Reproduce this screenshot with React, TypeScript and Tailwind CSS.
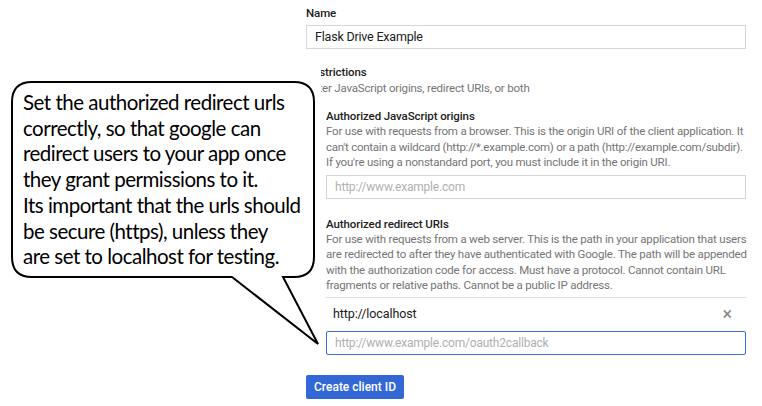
import React from "react";

export default function App() {
  const desc = "text-[11.5px] leading-[15.5px] tracking-[-0.2px] text-[#757575] whitespace-nowrap";
  const label = "text-[11.5px] leading-[16px] font-medium tracking-[-0.1px] text-[#212121]";
  return (
    <div className="relative w-[762px] h-[406px] bg-white overflow-hidden" style={{ fontFamily: "Roboto, 'Liberation Sans', sans-serif" }}>
      <div className="pl-[306px] pr-[16px] pt-[5px]">
        <div className={label}>Name</div>
        <div className="mt-[4px] h-[24px] border border-[#d6d6d6] flex items-center px-[8px] text-[12.5px] tracking-[-0.2px] text-[#212121]">Flask Drive Example</div>
        <div className={"mt-[15px] " + label}>Restrictions</div>
        <div className="text-[11.5px] leading-[16px] tracking-[-0.2px] text-[#757575]">Enter JavaScript origins, redirect URIs, or both</div>
        <div className="pl-[20px]">
          <div className={"mt-[12px] " + label}>Authorized JavaScript origins</div>
          <div className={desc}>
            <div>For use with requests from a browser. This is the origin URI of the client application. It</div>
            <div className="tracking-[-0.25px]">can't contain a wildcard (http://*.example.com) or a path (http://example.com/subdir).</div>
            <div>If you're using a nonstandard port, you must include it in the origin URI.</div>
          </div>
          <div className="mt-[4px] h-[24px] border border-[#d6d6d6] flex items-center px-[8px] text-[12px] tracking-[-0.2px] text-[#b0b0b0]">http://www.example.com</div>
          <div className={"mt-[17px] " + label}>Authorized redirect URIs</div>
          <div className={desc}>
            <div>For use with requests from a web server. This is the path in your application that users</div>
            <div>are redirected to after they have authenticated with Google. The path will be appended</div>
            <div>with the authorization code for access. Must have a protocol. Cannot contain URL</div>
            <div>fragments or relative paths. Cannot be a public IP address.</div>
          </div>
          <div className="mt-[3px] border-t border-[#e0e0e0]"></div>
          <div className="h-[33px] flex items-center justify-between pl-[7px] pr-[14px]">
            <span className="text-[12.5px] tracking-[-0.1px] text-[#212121]">http://localhost</span>
            <span className="text-[#8a8a8a] text-[18px] leading-none">×</span>
          </div>
          <div className="h-[24px] border border-[#3b6fd6] rounded-[2px] flex items-center px-[8px] text-[12px] tracking-[-0.2px] text-[#b0b0b0]">http://www.example.com/oauth2callback</div>
        </div>
        <div className="mt-[20px] w-[98px] h-[24px] bg-[#3367d6] rounded-[2px] flex items-center justify-center text-white text-[12px] font-medium">Create client ID</div>
      </div>

      <div className="absolute left-[296px] top-[62px] w-[25px] h-[34px] bg-white"></div>
      <svg className="absolute left-0 top-0" width="762" height="406">
        <path
          d="M 32 82 L 294 82 Q 314 82 314 102 L 314 257 Q 314 277 294 277 L 283 277 L 318 344 L 232 277 L 32 277 Q 12 277 12 257 L 12 102 Q 12 82 32 82 Z"
          fill="white"
          stroke="black"
          strokeWidth="2"
          strokeLinejoin="miter"
        />
      </svg>
      <div
        className="absolute left-[23px] top-[90px] w-[300px] text-[20.5px] leading-[25.7px] tracking-[-0.5px] text-black whitespace-nowrap"
        style={{ fontFamily: "Lato, 'Open Sans', sans-serif" }}
      >
        <div>Set the authorized redirect urls</div>
        <div>correctly, so that google can</div>
        <div>redirect users to your app once</div>
        <div>they grant permissions to it.</div>
        <div>Its important that the urls should</div>
        <div>be secure (https), unless they</div>
        <div>are set to localhost for testing.</div>
      </div>
    </div>
  );
}
